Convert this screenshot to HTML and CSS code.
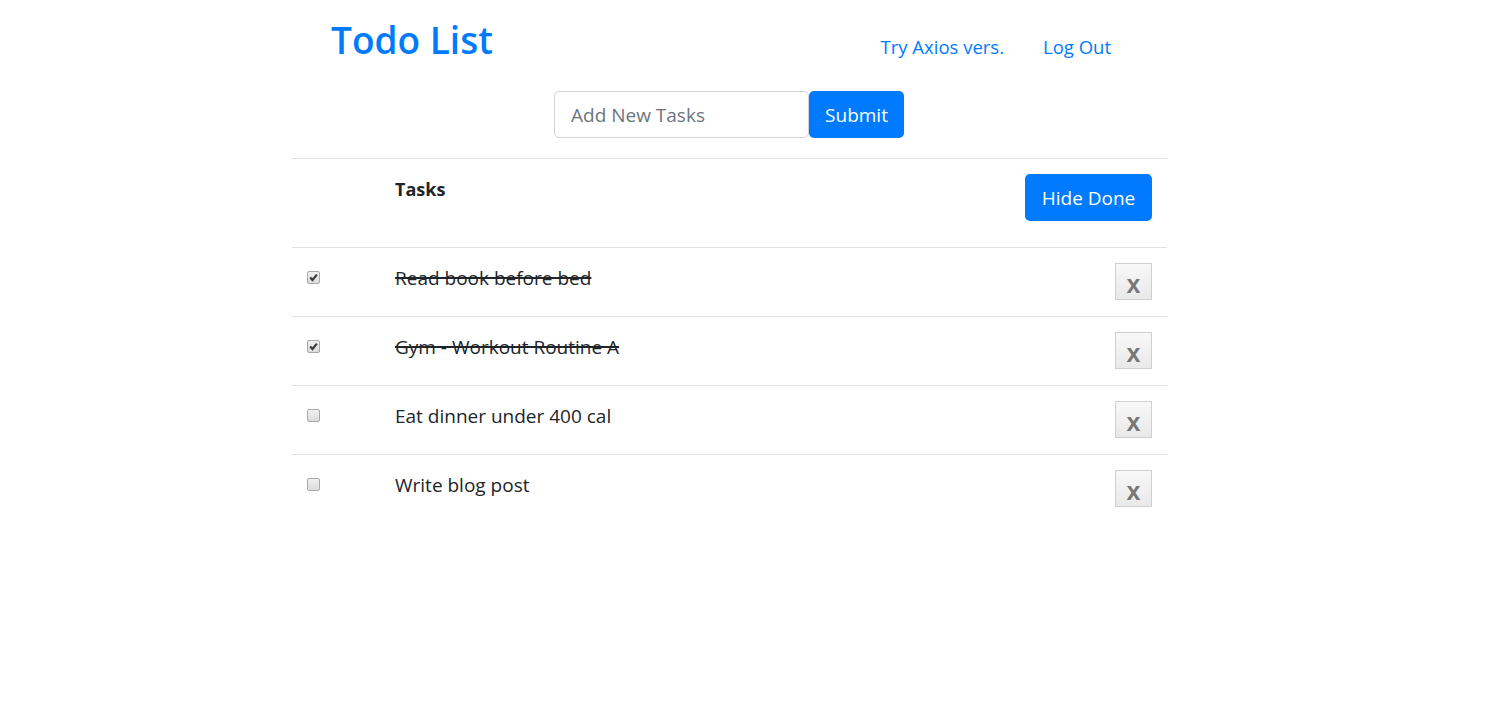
FILE: index.html
```html
<!DOCTYPE html>
<html lang="en">
<head>
<meta charset="utf-8">
<title>Todo List</title>
<link rel="stylesheet" href="styles.css">
</head>
<body>
<div class="page">
  <header class="topbar">
    <h1 class="brand">Todo List</h1>
    <nav class="links">
      <a href="#" class="link">Try Axios vers.</a>
      <a href="#" class="link">Log Out</a>
    </nav>
  </header>

  <form class="add-form">
    <input class="add-input" type="text" placeholder="Add New Tasks">
    <button class="btn btn-submit" type="button">Submit</button>
  </form>

  <table class="tasks">
    <thead>
      <tr>
        <th class="col-check"></th>
        <th class="col-name head-name">Tasks</th>
        <th class="col-action"><button class="btn btn-hide" type="button">Hide Done</button></th>
      </tr>
    </thead>
    <tbody>
      <tr>
        <td class="col-check"><span class="check checked"><svg viewBox="0 0 13 13" width="13" height="13"><path d="M3.2 6.4 L5.5 9 L9.9 3.6" fill="none" stroke="#3c3c3c" stroke-width="2.2"/></svg></span></td>
        <td class="col-name"><span class="done">Read book before bed</span></td>
        <td class="col-action"><button class="btn-x" type="button">x</button></td>
      </tr>
      <tr>
        <td class="col-check"><span class="check checked"><svg viewBox="0 0 13 13" width="13" height="13"><path d="M3.2 6.4 L5.5 9 L9.9 3.6" fill="none" stroke="#3c3c3c" stroke-width="2.2"/></svg></span></td>
        <td class="col-name"><span class="done">Gym - Workout Routine A</span></td>
        <td class="col-action"><button class="btn-x" type="button">x</button></td>
      </tr>
      <tr>
        <td class="col-check"><span class="check"></span></td>
        <td class="col-name">Eat dinner under 400 cal</td>
        <td class="col-action"><button class="btn-x" type="button">x</button></td>
      </tr>
      <tr>
        <td class="col-check"><span class="check"></span></td>
        <td class="col-name">Write blog post</td>
        <td class="col-action"><button class="btn-x" type="button">x</button></td>
      </tr>
    </tbody>
  </table>
</div>
</body>
</html>
```

FILE: styles.css
```css
*, *::before, *::after { box-sizing: border-box; }

body {
  margin: 0;
  font-family: "Open Sans", "Noto Sans", sans-serif;
  color: #212529;
  background: #fff;
}

.page {
  width: 875px;
  margin-left: 292px;
}

.topbar {
  display: flex;
  align-items: baseline;
  padding-top: 17px;
}

.brand {
  margin: 0 0 0 39px;
  font-size: 37px;
  line-height: 46px;
  font-weight: 600;
  color: #007bff;
}

.links {
  margin-left: auto;
  margin-right: 56px;
  display: flex;
  gap: 39px;
}

.link {
  color: #007bff;
  text-decoration: none;
  font-size: 18.5px;
}

.add-form {
  display: flex;
  padding-left: 262px;
  margin-top: 28px;
}

.add-input {
  width: 255px;
  height: 47px;
  padding: 0 16px;
  border: 1px solid #ced4da;
  border-radius: 5px;
  font-family: inherit;
  font-size: 19px;
  color: #495057;
}

.add-input::placeholder { color: #6c757d; }

.btn {
  border: none;
  border-radius: 5px;
  background: #007bff;
  color: #fff;
  font-family: inherit;
  font-size: 19px;
  height: 47px;
  padding: 0;
}

.btn-submit { width: 95px; }

.tasks {
  width: 100%;
  margin-top: 20px;
  border-collapse: collapse;
}

.tasks th,
.tasks td {
  padding: 12px;
  border-top: 1px solid #dee2e6;
  vertical-align: top;
  text-align: left;
}

.col-check { width: 91px; }

.tasks .col-action {
  text-align: right;
  width: 120px;
}

.head-name {
  font-size: 18px;
  font-weight: 700;
  line-height: 28px;
}

.tasks th.head-name { padding-top: 16px; }

.btn-hide {
  width: 127px;
  margin: 3px 3px 14px 0;
  display: inline-block;
}

.tasks td.col-name {
  font-size: 19px;
  line-height: 30px;
  padding-top: 15px;
}

.done { text-decoration: line-through; text-decoration-thickness: 2px; }

.check {
  display: block;
  width: 13px;
  height: 13px;
  margin: 11px 0 0 3px;
  border: 1px solid #a9a9a9;
  border-radius: 2px;
  background: linear-gradient(#f0f0f0, #dcdcdc);
  position: relative;
}

.check svg {
  position: absolute;
  left: -1px;
  top: -1px;
}

.btn-x {
  display: inline-block;
  width: 37px;
  height: 37px;
  margin: 3px 3px 4px 0;
  padding: 4px 0 0;
  border: 1px solid #cfcfcf;
  background: linear-gradient(#f8f8f8, #e9e9e9);
  font-family: "Liberation Sans", Arial, sans-serif;
  font-weight: 700;
  font-size: 25px;
  line-height: 30px;
  color: #777;
}
```
